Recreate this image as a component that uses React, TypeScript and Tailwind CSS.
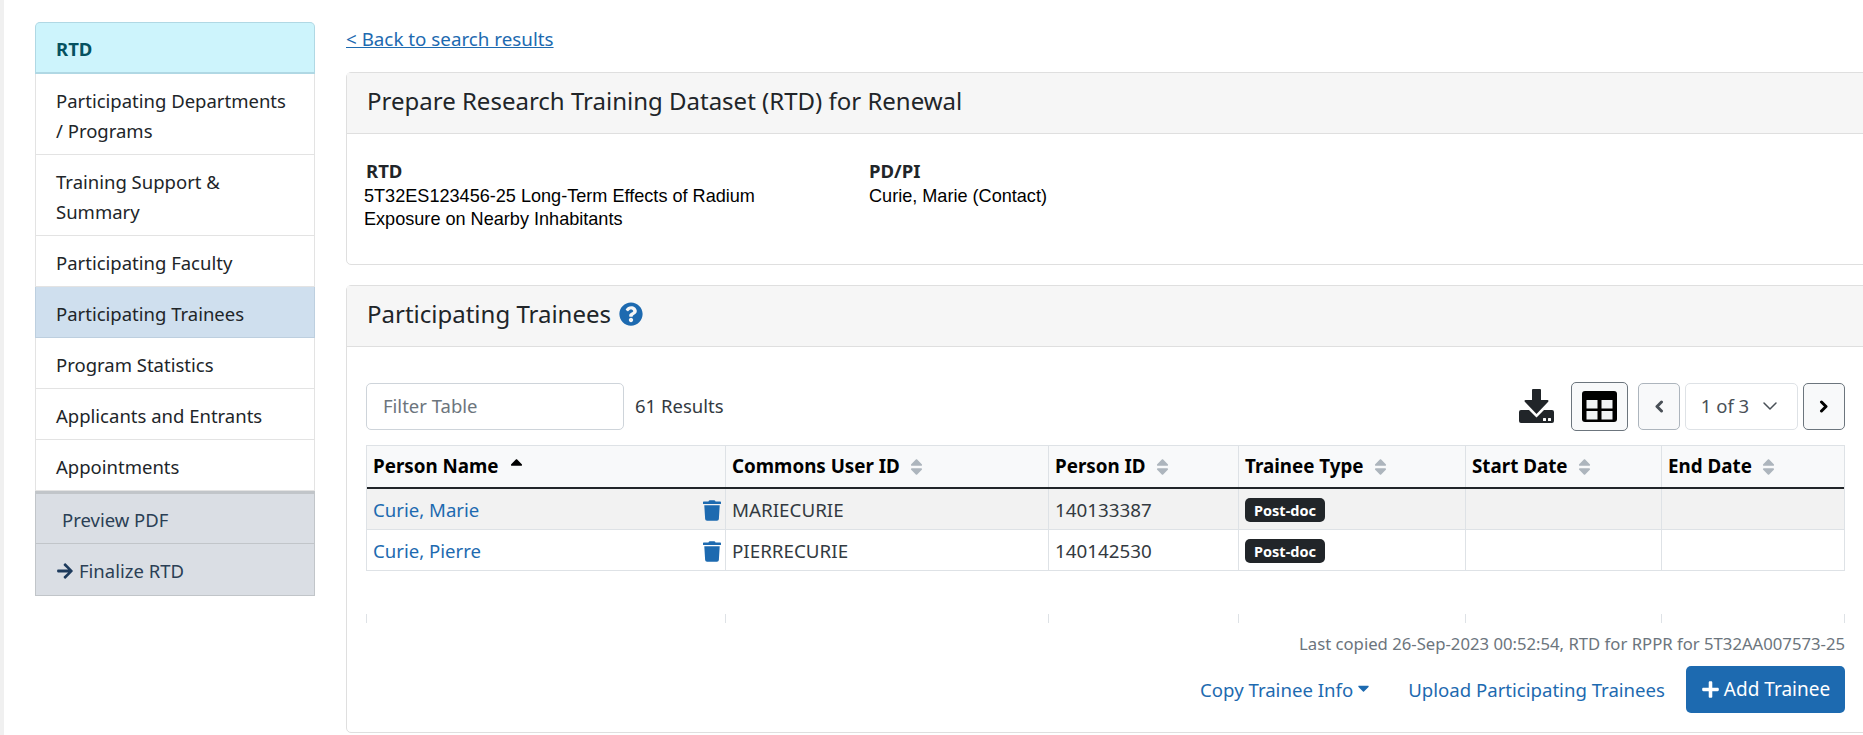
import React from "react";
import { FaTrash, FaQuestionCircle, FaArrowRight, FaPlus, FaSort, FaSortUp, FaCaretDown } from "react-icons/fa";
import { LuChevronDown } from "react-icons/lu";

const font = { fontFamily: '"Noto Sans", sans-serif' };

function NavItem({ children, active }: { children: React.ReactNode; active?: boolean }) {
  return (
    <div className={`border-x border-b px-[20px] pt-[11.5px] pb-[8.5px] leading-[30px] ${active ? "border-[#bdcfdf] bg-[#cfdfee]" : "border-[#e3e3e3] bg-white"} text-[#212529]`}>
      {children}
    </div>
  );
}

function Th({ w, label, sort = true, up }: { w: string; label: string; sort?: boolean; up?: boolean }) {
  return (
    <div className={`${w} flex h-[41px] items-center border-r border-[#dee2e6] px-[6px] text-[18.8px] font-bold text-black last:border-r-0`}>
      <span>{label}</span>
      {up ? <FaSortUp className="ml-[11px] h-[20px] w-[13px] text-black" /> : sort ? <FaSort className="ml-[10px] h-[20px] w-[13px] text-[#adb5bd]" /> : null}
    </div>
  );
}

function Row({ name, id, pid, shaded }: { name: string; id: string; pid: string; shaded?: boolean }) {
  const c = "flex h-full items-center border-r border-[#dee2e6] px-[6px] pt-[2px]";
  return (
    <div className={`flex h-[41px] items-center border-b border-[#dee2e6] text-[18.8px] ${shaded ? "bg-[#f2f2f2]" : "bg-white"}`}>
      <div className={`${c} w-[359px] justify-between pr-[4px] text-[18.6px] text-[#1d6ab0]`}>
        <span>{name}</span>
        <FaTrash className="h-[21px] w-[18px]" />
      </div>
      <div className={`${c} w-[323px] text-[#333a41]`}>{id}</div>
      <div className={`${c} w-[190px] text-[#333a41]`}>{pid}</div>
      <div className={`${c} w-[227px]`}>
        <span className="rounded-[5px] bg-[#212529] px-[9px] py-[4px] text-[14.5px] leading-[16px] font-bold text-white">Post-doc</span>
      </div>
      <div className={`${c} w-[196px]`} />
      <div className="h-full w-[182px]" />
    </div>
  );
}

function Chev({ dir, cls }: { dir: "l" | "r"; cls: string }) {
  return (
    <svg viewBox="0 0 10 13" className={`h-[13px] w-[10px] ${cls}`} fill="none" stroke="currentColor" strokeWidth="3" strokeLinecap="round" strokeLinejoin="round">
      <polyline points={dir === "l" ? "7.5,2 3,6.5 7.5,11" : "2.5,2 7,6.5 2.5,11"} />
    </svg>
  );
}

export default function App() {
  return (
    <div style={font} className="flex h-[735px] w-[1863px] overflow-hidden border-l-[4px] border-[#f0f0f0] bg-white text-[18.5px] text-[#212529]">
      <aside className="mt-[22px] ml-[31px] w-[280px] shrink-0">
        <div className="flex h-[52px] items-center rounded-t-[5px] border border-b-[2px] border-[#b0d8e4] bg-[#cdf4fc] px-[20px] pt-[2px] font-bold text-[#055160]">RTD</div>
        <NavItem>Participating Departments / Programs</NavItem>
        <NavItem>Training Support &amp; Summary</NavItem>
        <NavItem>Participating Faculty</NavItem>
        <NavItem active>Participating Trainees</NavItem>
        <NavItem>Program Statistics</NavItem>
        <NavItem>Applicants and Entrants</NavItem>
        <NavItem>Appointments</NavItem>
        <div className="flex h-[53px] items-center border border-t-[3px] border-[#c1c5c9] bg-[#dadee4] pt-[2px] pl-[26px] text-[#2b3f55]">Preview PDF</div>
        <div className="flex h-[52px] items-center gap-[5px] border border-t-0 border-[#c1c5c9] bg-[#dadee4] pt-[2px] pl-[20px] text-[#2b3f55]">
          <FaArrowRight className="h-[18px] w-[18px] text-[#1d3a5c]" />
          Finalize RTD
        </div>
      </aside>
      <main className="ml-[31px] w-[1560px] shrink-0">
        <a className="mt-[27px] block h-[25px] text-[18.8px] leading-[25px] text-[#1d6ab0] underline">&lt; Back to search results</a>
        <section className="mt-[20px] h-[193px] rounded-[5px] border border-[#dfdfdf]">
          <div className="flex h-[61px] items-center border-b border-[#dfdfdf] bg-[#f6f6f6] px-[20px] pb-[5px] text-[24px] text-[#212529]">Prepare Research Training Dataset (RTD) for Renewal</div>
          <div className="flex pt-[23px]">
            <div className="ml-[19px] w-[503px]">
              <div className="leading-[28px] font-bold">RTD</div>
              <div style={{ fontFamily: '"Liberation Sans", sans-serif' }} className="-ml-[2px] w-[420px] text-[18.1px] leading-[22.5px] text-black">5T32ES123456-25 Long-Term Effects of Radium Exposure on Nearby Inhabitants</div>
            </div>
            <div>
              <div className="leading-[28px] font-bold">PD/PI</div>
              <div style={{ fontFamily: '"Liberation Sans", sans-serif' }} className="text-[18.1px] leading-[22.5px] text-black">Curie, Marie (Contact)</div>
            </div>
          </div>
        </section>
        <section className="mt-[20px] h-[448px] rounded-[5px] border border-[#dfdfdf]">
          <div className="flex h-[61px] items-center gap-[8px] border-b border-[#dfdfdf] bg-[#f6f6f6] px-[20px] pb-[5px] text-[24px]">
            Participating Trainees
            <FaQuestionCircle className="h-[24px] w-[24px] text-[#1d6ab0]" />
          </div>
          <div className="w-[1498px] pl-[19px]">
            <div className="mt-[35px] flex h-[48px] items-center">
              <div className="flex h-[47px] w-[258px] items-center rounded-[5px] border border-[#ced4da] px-[16px] text-[#6c757d]">Filter Table</div>
              <span className="ml-[11px] text-[#333a41]">61 Results</span>
              <div className="ml-auto flex items-center">
                <svg viewBox="0 0 35 34" className="h-[34px] w-[35px] text-[#212529]" fill="currentColor">
                  <path d="M14 0h7a1 1 0 0 1 1 1v10h6.5a1 1 0 0 1 .7 1.7L17.5 25 5.8 12.7a1 1 0 0 1 .7-1.7H13V1a1 1 0 0 1 1-1z" />
                  <path d="M2 21h8l7.5 7.5L25 21h8a2 2 0 0 1 2 2v9a2 2 0 0 1-2 2H2a2 2 0 0 1-2-2v-9a2 2 0 0 1 2-2z" />
                  <rect x="24" y="29" width="3" height="3" rx="0.5" fill="#fff" />
                  <rect x="29" y="29" width="3" height="3" rx="0.5" fill="#fff" />
                </svg>
                <div className="ml-[17px] flex h-[49px] w-[57px] items-center justify-center rounded-[5px] border border-[#6c757d] bg-[#f8f9fa]">
                  <svg viewBox="0 0 35 31" className="h-[31px] w-[35px]">
                    <rect width="35" height="31" rx="3" fill="#000" />
                    <rect x="4.5" y="9" width="11" height="8.5" fill="#f1f3f5" />
                    <rect x="19.5" y="9" width="11" height="8.5" fill="#f1f3f5" />
                    <rect x="4.5" y="20" width="11" height="8.5" fill="#f1f3f5" />
                    <rect x="19.5" y="20" width="11" height="8.5" fill="#f1f3f5" />
                  </svg>
                </div>
                <div className="ml-[10px] flex h-[47px] w-[42px] items-center justify-center rounded-[5px] border border-[#adb5bd] bg-[#f8f9fa]">
                  <Chev dir="l" cls="text-[#495057]" />
                </div>
                <div className="ml-[5px] flex h-[47px] w-[113px] items-center justify-center gap-[9px] rounded-[5px] border border-[#dee2e6] text-[#495057]">
                  1 of 3 <LuChevronDown className="h-[24px] w-[24px]" strokeWidth={1.5} />
                </div>
                <div className="ml-[5px] flex h-[47px] w-[42px] items-center justify-center rounded-[5px] border border-[#6c757d] bg-[#f8f9fa]">
                  <Chev dir="r" cls="text-black" />
                </div>
              </div>
            </div>
            <div className="mt-[15px] border-x border-t border-[#dee2e6]">
              <div className="flex border-b-[2px] border-[#212529] bg-[#f8f9fa]">
                <Th w="w-[359px]" label="Person Name" up />
                <Th w="w-[323px]" label="Commons User ID" />
                <Th w="w-[190px]" label="Person ID" />
                <Th w="w-[227px]" label="Trainee Type" />
                <Th w="w-[196px]" label="Start Date" />
                <Th w="w-[182px]" label="End Date" />
              </div>
              <Row name="Curie, Marie" id="MARIECURIE" pid="140133387" shaded />
              <Row name="Curie, Pierre" id="PIERRECURIE" pid="140142530" />
            </div>
            <div className="mt-[43px] flex h-[9px]">
              <div className="w-[359px] border-l border-[#dee2e6]" />
              <div className="w-[323px] border-l border-[#dee2e6]" />
              <div className="w-[190px] border-l border-[#dee2e6]" />
              <div className="w-[227px] border-l border-[#dee2e6]" />
              <div className="w-[196px] border-l border-[#dee2e6]" />
              <div className="w-[184px] border-x border-[#dee2e6]" />
            </div>
            <div className="mt-[9px] text-right text-[16.7px] leading-[24px] text-[#6c757d]">Last copied 26-Sep-2023 00:52:54, RTD for RPPR for 5T32AA007573-25</div>
            <div className="mt-[10px] flex items-center justify-end text-[18.6px] text-[#1d6ab0]">
              <span className="flex items-center">Copy Trainee Info<FaCaretDown className="mb-[3px] ml-[3px] h-[18px] w-[15px]" /></span>
              <span className="ml-[37px]">Upload Participating Trainees</span>
              <div className="ml-[21px] flex h-[47px] w-[159px] items-center justify-center gap-[4px] rounded-[5px] bg-[#1d6ab0] text-[19px] text-white">
                <FaPlus className="h-[19px] w-[19px]" />
                Add Trainee
              </div>
            </div>
          </div>
        </section>
      </main>
    </div>
  );
}
